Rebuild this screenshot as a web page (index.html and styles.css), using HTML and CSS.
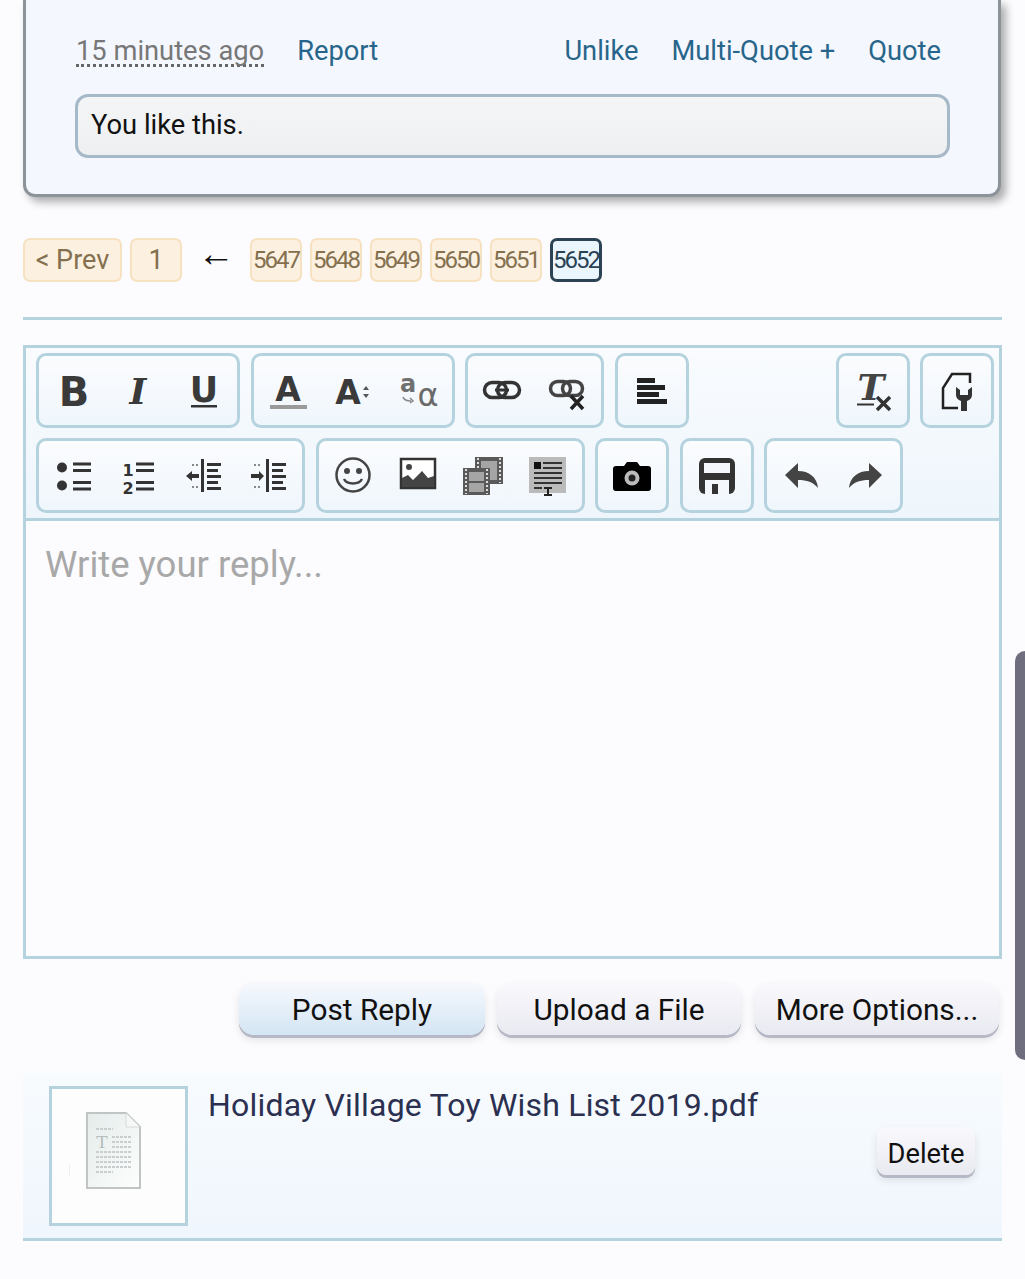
FILE: index.html
```html
<!DOCTYPE html>
<html lang="en">
<head>
    <meta charset="UTF-8">
    <meta name="viewport" content="width=device-width, initial-scale=1.0">
    <title>Write your reply</title>
    <link rel="stylesheet" href="styles.css">
</head>
<body>
    <div class="post">
        <div class="post-links">
            <span class="post-time">15 minutes ago</span>
            <a class="link report">Report</a>
            <a class="link unlike">Unlike</a>
            <a class="link">Multi-Quote +</a>
            <a class="link">Quote</a>
        </div>
        <div class="likes">You like this.</div>
    </div>

    <div class="pages">
        <a class="page wide">&lt; Prev</a>
        <a class="page first">1</a>
        <span class="page-arrow">&#8592;</span>
        <a class="page num">5647</a>
        <a class="page num">5648</a>
        <a class="page num">5649</a>
        <a class="page num">5650</a>
        <a class="page num">5651</a>
        <a class="page num current">5652</a>
    </div>

    <div class="rule"></div>

    <div class="editor">
        <div class="toolbar">
            <div class="tool-row">
                <div class="tool-group">
                    <span class="tool"><svg viewBox="0 0 40 40"><text x="21" y="35" text-anchor="middle" class="glyph-b">B</text></svg></span>
                    <span class="tool"><svg viewBox="0 0 40 40"><text x="20" y="33" text-anchor="middle" class="glyph-i">I</text></svg></span>
                    <span class="tool"><svg viewBox="0 0 40 40"><text x="21" y="31" text-anchor="middle" class="glyph-u">U</text><rect x="8" y="34" width="26" height="2.500" fill="#333"/></svg></span>
                </div>
                <div class="tool-group">
                    <span class="tool"><svg viewBox="0 0 40 40"><text x="20" y="30" text-anchor="middle" class="glyph-a">A</text><rect x="2" y="34" width="37" height="4" fill="#9a9a9a"/></svg></span>
                    <span class="tool"><svg viewBox="0 0 40 40"><text x="15" y="33" text-anchor="middle" class="glyph-a2">A</text><path d="M33 15l3 4h-6zM33 27l3-4h-6z" fill="#555"/></svg></span>
                    <span class="tool"><svg viewBox="0 0 40 40"><text x="10" y="21" text-anchor="middle" class="glyph-sm">a</text><text x="30" y="35" text-anchor="middle" class="glyph-alpha">&#945;</text><path d="M5 26c1 3 4 4 8 4M12 27l3 3-3 2" fill="none" stroke="#888" stroke-width="1.500"/></svg></span>
                </div>
                <div class="tool-group">
                    <span class="tool"><svg viewBox="0 0 40 40"><g fill="none" stroke="#333" stroke-width="3.500"><rect x="2.500" y="11.500" width="22" height="15" rx="7.500"/><rect x="15.500" y="11.500" width="22" height="15" rx="7.500"/></g><rect x="13" y="17.500" width="14" height="3" fill="#333"/></svg></span>
                    <span class="tool"><svg viewBox="0 0 40 40"><g fill="none" stroke="#444" stroke-width="3.500"><rect x="3.500" y="10.500" width="20" height="14" rx="7"/><rect x="15.500" y="10.500" width="20" height="14" rx="7"/></g><path d="M24 25l12 13M36 25L24 38" stroke="#222" stroke-width="3.500"/></svg></span>
                </div>
                <div class="tool-group">
                    <span class="tool"><svg viewBox="0 0 40 40" fill="#222"><rect x="5" y="7" width="18" height="5"/><rect x="5" y="14" width="28" height="5"/><rect x="5" y="21" width="22" height="5"/><rect x="5" y="28" width="30" height="5"/></svg></span>
                </div>
                <div class="tool-group push">
                    <span class="tool"><svg viewBox="0 0 40 40"><text x="18" y="29" text-anchor="middle" class="glyph-tx">T</text><rect x="4" y="32.500" width="17" height="2" fill="#333"/><path d="M24 26l13 13M37 26L24 39" stroke="#333" stroke-width="3.500"/></svg></span>
                </div>
                <div class="tool-group">
                    <span class="tool"><svg viewBox="0 0 40 40"><path d="M33 12V3H15L6 17v20h15" fill="none" stroke="#222" stroke-width="2.500"/><path d="M19 16v8c0 3 2 5 5 6v10h6V30c3-1 5-3 5-6v-8l-4 3v5h-8v-5z" fill="#333"/></svg></span>
                </div>
            </div>
            <div class="tool-row">
                <div class="tool-group">
                    <span class="tool"><svg viewBox="0 0 40 40" fill="#333"><circle cx="9" cy="11.500" r="5"/><circle cx="9" cy="29.500" r="5"/><rect x="20" y="6.500" width="18" height="3"/><rect x="20" y="13" width="18" height="3"/><rect x="20" y="25" width="18" height="3"/><rect x="20" y="31.500" width="18" height="3"/></svg></span>
                    <span class="tool"><svg viewBox="0 0 40 40" fill="#333"><text x="10" y="20" text-anchor="middle" class="glyph-num">1</text><text x="10" y="38" text-anchor="middle" class="glyph-num">2</text><rect x="18" y="6.500" width="18" height="3"/><rect x="18" y="13" width="18" height="3"/><rect x="18" y="25" width="18" height="3"/><rect x="18" y="31.500" width="18" height="3"/></svg></span>
                    <span class="tool"><svg viewBox="0 0 40 40" fill="#333"><rect x="18" y="3" width="3" height="33"/><rect x="24" y="7" width="14" height="3"/><rect x="24" y="13" width="11" height="3"/><rect x="24" y="19" width="14" height="3"/><rect x="24" y="25" width="11" height="3"/><rect x="24" y="31" width="14" height="3"/><path d="M3 20l6-5v3h7v4H9v3z"/><path d="M9 8h2v2H9zM13 8h2v2h-2zM9 30h2v2H9zM13 30h2v2h-2z" fill="#888"/></svg></span>
                    <span class="tool"><svg viewBox="0 0 40 40" fill="#333"><rect x="18" y="3" width="3" height="33"/><rect x="24" y="7" width="14" height="3"/><rect x="24" y="13" width="11" height="3"/><rect x="24" y="19" width="14" height="3"/><rect x="24" y="25" width="11" height="3"/><rect x="24" y="31" width="14" height="3"/><path d="M16 20l-5-5v3H3v4h8v3z"/><path d="M6 8h2v2H6zM10 8h2v2h-2zM6 30h2v2H6zM10 30h2v2h-2z" fill="#888"/></svg></span>
                </div>
                <div class="tool-group">
                    <span class="tool"><svg viewBox="0 0 40 40"><circle cx="20" cy="19" r="16.500" fill="none" stroke="#444" stroke-width="2.500"/><circle cx="14" cy="15" r="3" fill="#444"/><circle cx="26" cy="15" r="3" fill="#444"/><path d="M11 23c3 6 15 6 18 0" fill="none" stroke="#444" stroke-width="2.500"/></svg></span>
                    <span class="tool"><svg viewBox="0 0 40 40"><rect x="3" y="3" width="34" height="29" fill="#fff" stroke="#333" stroke-width="2.500"/><circle cx="11" cy="11" r="3" fill="#444"/><path d="M4 31v-9l6-3 5 5 9-9 6 7 6-2v11z" fill="#444"/></svg></span>
                    <span class="tool"><svg viewBox="0 0 40 40"><rect x="12" y="1" width="28" height="27" fill="#5a5a5a"/><rect x="18" y="5" width="16" height="19" fill="#a5a5a5"/><path d="M15 2v25M37 2v25" stroke="#ddd" stroke-width="2" stroke-dasharray="2 2"/><rect x="0" y="12" width="27" height="27" fill="#5a5a5a"/><rect x="6" y="16" width="15" height="9" fill="#a5a5a5"/><rect x="6" y="27" width="15" height="9" fill="#a5a5a5"/><path d="M3 13v25M24 13v25" stroke="#ddd" stroke-width="2" stroke-dasharray="2 2"/></svg></span>
                    <span class="tool"><svg viewBox="0 0 40 40"><rect x="1" y="1" width="37" height="36" fill="#bbb"/><rect x="6" y="6" width="7" height="7" fill="#111"/><g fill="#333"><rect x="15" y="6" width="19" height="2"/><rect x="15" y="11" width="19" height="2"/><rect x="6" y="16" width="28" height="2"/><rect x="6" y="21" width="28" height="2"/><rect x="6" y="26" width="28" height="2"/><rect x="6" y="31" width="8" height="2"/></g><path d="M16 31h8v2h-3v5h3v2h-8v-2h3v-5h-3z" fill="#222"/></svg></span>
                </div>
                <div class="tool-group">
                    <span class="tool"><svg viewBox="0 0 40 40"><path d="M1 13c0-2 1-3 3-3h8l3-4h10l3 4h8c2 0 3 1 3 3v19c0 2-1 3-3 3H4c-2 0-3-1-3-3z" fill="#000"/><circle cx="20" cy="22" r="7.500" fill="#bbb"/><circle cx="20" cy="22" r="3.500" fill="#222"/></svg></span>
                </div>
                <div class="tool-group">
                    <span class="tool"><svg viewBox="0 0 40 40"><rect x="2" y="2" width="36" height="36" rx="6" fill="#333"/><rect x="7" y="7" width="26" height="10" fill="#f4f8fc"/><rect x="8" y="24" width="24" height="14" fill="#f4f8fc"/><rect x="15" y="28" width="6" height="10" fill="#333"/></svg></span>
                </div>
                <div class="tool-group">
                    <span class="tool"><svg viewBox="0 0 40 40"><path d="M4 19L17 7v8c11 0 19 6 20 17-5-6-11-8-20-8v8z" fill="#444"/></svg></span>
                    <span class="tool"><svg viewBox="0 0 40 40"><path d="M36 19L23 7v8C12 15 4 21 3 32c5-6 11-8 20-8v8z" fill="#444"/></svg></span>
                </div>
            </div>
        </div>
        <div class="reply-area">Write your reply...</div>
    </div>

    <div class="form-buttons">
        <button class="btn btn-primary">Post Reply</button>
        <button class="btn btn-upload">Upload a File</button>
        <button class="btn btn-more">More Options...</button>
    </div>

    <div class="attachment">
        <div class="thumb">
            <svg viewBox="0 0 133 133">
                <defs>
                    <linearGradient id="pageFill" x1="0" y1="0" x2="1" y2="1">
                        <stop offset="0" stop-color="#e4ecea"/>
                        <stop offset="1" stop-color="#fdfefe"/>
                    </linearGradient>
                </defs>
                <rect x="17" y="76" width="1" height="12" fill="#eee"/>
                <path d="M35 24h39l14 14v61H35z" fill="url(#pageFill)" stroke="#c0c4c4" stroke-width="2"/>
                <path d="M74 24v14h14z" fill="#f6f8f8" stroke="#d5d9d9"/>
                <text x="50" y="59" text-anchor="middle" class="file-t">T</text>
                <g stroke="#c9cfcf" stroke-width="2" stroke-dasharray="3 1">
                    <path d="M44 40h17"/>
                    <path d="M60 48h19M60 53h19M60 58h19"/>
                    <path d="M44 63h35M44 68h35M44 73h35M44 78h35"/>
                    <path d="M44 83h17"/>
                </g>
            </svg>
        </div>
        <div class="file-name">Holiday Village Toy Wish List 2019.pdf</div>
        <button class="btn btn-delete">Delete</button>
    </div>

    <div class="scroll-thumb"></div>
</body>
</html>
```
FILE: styles.css
```css
html, body {
    margin: 0;
    padding: 0;
}
body {
    position: relative;
    height: 1279px;
    overflow: hidden;
    box-sizing: border-box;
    padding: 0 23px;
    background-color: #fcfcfe;
    font-family: Roboto, "Liberation Sans", sans-serif;
    color: #111;
}

/* post card */
.post {
    box-sizing: border-box;
    width: 978px;
    height: 197px;
    padding: 35px 49px 0 49px;
    background-color: #f5f7ff;
    border: 3px solid #8d9499;
    border-top: 0;
    border-radius: 0 0 12px 12px;
    box-shadow: 5px 5px 8px rgba(0, 0, 0, 0.32);
}
.post-links {
    display: flex;
    gap: 33px;
    height: 59px;
    padding: 0 8px 0 1px;
    font-size: 27.3px;
    line-height: 32px;
}
.post-time {
    height: 29px;
    color: #777;
    border-bottom: 3px dotted #666;
}
.link {
    color: #27668a;
}
.unlike {
    margin-left: auto;
}
.likes {
    box-sizing: border-box;
    width: 875px;
    height: 64px;
    padding: 0 13px;
    font-size: 27.3px;
    line-height: 57px;
    color: #111;
    background: linear-gradient(#f4f5f7, #eeeff1);
    border: 3px solid #a6b9c8;
    border-radius: 13px;
}

/* pagination */
.pages {
    display: flex;
    align-items: center;
    gap: 8px;
    height: 44px;
    margin-top: 41px;
}
.page {
    box-sizing: border-box;
    height: 44px;
    text-align: center;
    font-size: 27px;
    line-height: 40px;
    color: #84704f;
    background-color: #fcf1e0;
    border: 2px solid #f6e1c0;
    border-radius: 7px;
}
.wide {
    width: 99px;
}
.first {
    width: 52px;
}
.num {
    width: 52px;
    font-size: 24px;
    letter-spacing: -2px;
}
.current {
    color: #2a4354;
    background-color: #ebf5fd;
    border: 3px solid #2b4353;
    line-height: 38px;
}
.page-arrow {
    width: 52px;
    margin-top: -12px;
    text-align: center;
    font-size: 37px;
    line-height: 40px;
    color: #111;
}
.rule {
    height: 3px;
    margin-top: 35px;
    background-color: #b5d3df;
}

/* editor */
.editor {
    box-sizing: border-box;
    width: 979px;
    height: 614px;
    margin-top: 25px;
    border: 3px solid #b5d3df;
}
.toolbar {
    display: flex;
    flex-direction: column;
    gap: 10px;
    padding: 5px 5px 5px 10px;
    background: linear-gradient(#f9fbfe, #eef6fc);
    border-bottom: 3px solid #b5d3df;
}
.tool-row {
    display: flex;
    gap: 10.5px;
    height: 75px;
}
.tool-row:first-child {
    padding-right: 0;
}
.tool-group {
    display: flex;
    box-sizing: border-box;
    padding: 0 1.5px;
    background: linear-gradient(#fbfcfe, #eff6fc);
    border: 3px solid #b5d3df;
    border-radius: 10px;
}
.push {
    margin-left: auto;
}
.tool {
    display: flex;
    align-items: center;
    justify-content: center;
    width: 65px;
}
.tool svg {
    width: 40px;
    height: 40px;
    overflow: visible;
}
.glyph-b, .glyph-u, .glyph-a, .glyph-a2 {
    font-family: "DejaVu Sans", sans-serif;
    font-weight: bold;
    fill: #3a3a3a;
}
.glyph-b {
    font-size: 40px;
}
.glyph-u {
    font-size: 35px;
}
.glyph-a {
    font-size: 33px;
}
.glyph-a2 {
    font-size: 33px;
}
.glyph-i {
    font-family: "DejaVu Serif", serif;
    font-style: italic;
    font-weight: bold;
    font-size: 36px;
    fill: #3a3a3a;
}
.glyph-sm {
    font-family: "DejaVu Sans", sans-serif;
    font-weight: bold;
    font-size: 24px;
    fill: #707070;
}
.glyph-alpha {
    font-family: "DejaVu Sans", sans-serif;
    font-size: 32px;
    fill: #6a6a6a;
}
.glyph-num {
    font-family: "DejaVu Sans", sans-serif;
    font-weight: bold;
    font-size: 16px;
    fill: #333;
}
.glyph-tx {
    font-family: "DejaVu Serif", serif;
    font-style: italic;
    font-weight: bold;
    font-size: 36px;
    fill: #444;
}
.reply-area {
    padding: 23px 19px;
    font-size: 36.5px;
    line-height: 42px;
    color: #a8a8a8;
}

/* buttons */
.form-buttons {
    display: flex;
    justify-content: flex-end;
    gap: 12px;
    width: 976px;
    margin-top: 23px;
}
.btn {
    box-sizing: border-box;
    height: 53px;
    padding: 2px 0 0;
    font-family: Roboto, "Liberation Sans", sans-serif;
    font-size: 29.8px;
    color: #111;
    background: linear-gradient(#f9f9fd, #e9e9f1);
    border: 0;
    border-radius: 15px;
    box-shadow: 0 3px 0 #b6b8c6, 0 5px 8px rgba(0, 0, 0, 0.1);
}
.btn-primary {
    width: 246px;
    background: linear-gradient(#f7f9fd, #d3e5f4);
}
.btn-upload {
    width: 244px;
}
.btn-more {
    width: 244px;
    margin-left: 2px;
}

/* attachment */
.attachment {
    display: flex;
    box-sizing: border-box;
    width: 979px;
    height: 168px;
    margin-top: 38px;
    padding: 13px 26px 0;
    background: linear-gradient(#f7fbfe, #f0f6fd);
    border-bottom: 3px solid #b5d3df;
}
.thumb {
    box-sizing: border-box;
    width: 139px;
    height: 140px;
    background-color: #fdfdfe;
    border: 3px solid #b5d3df;
}
.thumb svg {
    display: block;
    width: 133px;
    height: 133px;
}
.file-t {
    font-family: "DejaVu Serif", serif;
    font-size: 17px;
    fill: #b4bcbc;
}
.file-name {
    margin-left: 20px;
    font-size: 32px;
    line-height: 38px;
    letter-spacing: 0.2px;
    color: #2b3050;
}
.btn-delete {
    margin: 41px 1px 0 auto;
    width: 98px;
    height: 48px;
    padding-top: 6px;
    font-size: 27.3px;
    border-radius: 9px;
    flex-shrink: 0;
}

.scroll-thumb {
    position: absolute;
    top: 651px;
    right: 0;
    width: 10px;
    height: 409px;
    background-color: #6e6e7e;
    border-radius: 10px 0 0 10px;
}
```
